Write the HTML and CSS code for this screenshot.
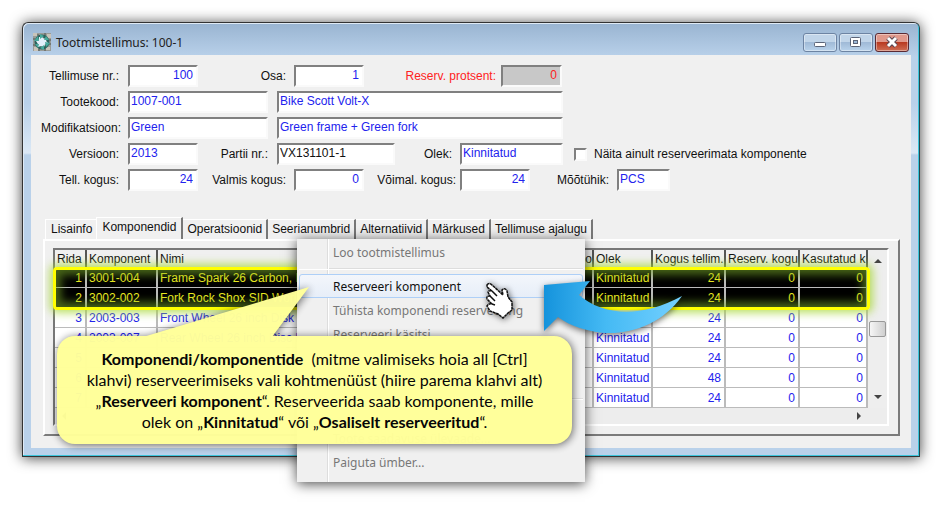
FILE: index.html
```html
<!DOCTYPE html>
<html lang="et">
<head>
    <meta charset="UTF-8">
    <title>Tootmistellimus: 100-1</title>
    <link rel="stylesheet" href="styles.css">
</head>
<body>
    <main class="window">
        <header class="titlebar">
            <svg class="app-icon" width="18" height="18" viewBox="0 0 18 18">
                <rect width="18" height="18" fill="#999c98"/>
                <path d="M0 0h4v3H0zM14 1h4v4h-4zM1 14h4v4H1zM13 14h4v3h-4z" fill="#c9c4ba"/>
                <path d="M0 6h2M5 1v2M12 0v3M16 7h2M0 12h3M6 16v2M12 15v3M15 11h3" stroke="#50544f"/>
                <circle cx="9" cy="9" r="6" fill="none" stroke="#2c625c" stroke-width="3"/>
                <path d="M9 4l2 2 3-1-1 3 2 2-3 1-1 3-3-1-3 1v-3l-2-3 3-1 0-3z" fill="#e2effa"/>
                <path d="M7 1l4 2-4 3zM13 3l3 4-5 0zM17 10l-4 4-1-5zM11 17l-4-2 4-3zM5 15l-3-4 4 0zM1 8l4-5 1 5z" fill="#46aa9d"/>
            </svg>
            <h1>Tootmistellimus: 100-1</h1>
            <div class="window-buttons">
                <button type="button" aria-label="Minimeeri">
                    <svg width="14" height="12" viewBox="0 0 14 12"><rect x="1.5" y="6.5" width="11" height="4" rx="1" fill="#fff" stroke="#5b6478"/></svg>
                </button>
                <button type="button" aria-label="Maksimeeri">
                    <svg width="14" height="12" viewBox="0 0 14 12"><rect x="1.5" y="1.5" width="10" height="9" rx="1" fill="#fff" stroke="#5b6478"/><rect x="4.5" y="4.5" width="4" height="3" fill="#9bb8d8" stroke="#5b6478"/></svg>
                </button>
                <button type="button" class="close" aria-label="Sulge">
                    <svg width="14" height="12" viewBox="0 0 14 12"><path d="M3 2l8 8M11 2l-8 8" stroke="#5a4651" stroke-width="5"/><path d="M3 2l8 8M11 2l-8 8" stroke="#fff" stroke-width="3"/></svg>
                </button>
            </div>
        </header>

        <div class="client">
            <form class="order">
                <div class="row">
                    <label class="l-first" for="tellimus">Tellimuse nr.:</label>
                    <input class="w-s num" id="tellimus" type="text" value="100">
                    <label class="l-mid" for="osa">Osa:</label>
                    <input class="w-s num" id="osa" type="text" value="1">
                    <label class="l-protsent red" for="protsent">Reserv. protsent:</label>
                    <input class="w-protsent num locked red" id="protsent" type="text" value="0" readonly>
                </div>
                <div class="row">
                    <label class="l-first" for="kood">Tootekood:</label>
                    <input class="w-l" id="kood" type="text" value="1007-001">
                    <input class="w-xl" type="text" value="Bike Scott Volt-X" aria-label="Toote nimi">
                </div>
                <div class="row">
                    <label class="l-first" for="modif">Modifikatsioon:</label>
                    <input class="w-l" id="modif" type="text" value="Green">
                    <input class="w-xl" type="text" value="Green frame + Green fork" aria-label="Modifikatsiooni nimi">
                </div>
                <div class="row">
                    <label class="l-first" for="versioon">Versioon:</label>
                    <input class="w-s" id="versioon" type="text" value="2013">
                    <label class="l-partii" for="partii">Partii nr.:</label>
                    <input class="w-m black" id="partii" type="text" value="VX131101-1">
                    <label class="l-olek" for="olek">Olek:</label>
                    <input class="w-olek" id="olek" type="text" value="Kinnitatud">
                    <input class="check" id="naita" type="checkbox">
                    <label for="naita">Näita ainult reserveerimata komponente</label>
                </div>
                <div class="row">
                    <label class="l-first" for="kogus">Tell. kogus:</label>
                    <input class="w-s num" id="kogus" type="text" value="24">
                    <label class="l-mid" for="valmis">Valmis kogus:</label>
                    <input class="w-s num" id="valmis" type="text" value="0">
                    <label class="l-mid tight" for="voimal">Võimal. kogus:</label>
                    <input class="w-s num" id="voimal" type="text" value="24">
                    <label class="l-yhik" for="yhik">Mõõtühik:</label>
                    <input class="w-xs" id="yhik" type="text" value="PCS">
                </div>
            </form>

            <nav class="tabs">
                <button type="button">Lisainfo</button>
                <button type="button" class="active">Komponendid</button>
                <button type="button">Operatsioonid</button>
                <button type="button">Seerianumbrid</button>
                <button type="button">Alternatiivid</button>
                <button type="button">Märkused</button>
                <button type="button">Tellimuse ajalugu</button>
            </nav>

            <section class="panel">
                <div class="grid">
                    <div class="grid-body">
                        <table>
                            <colgroup>
                                <col class="c-rida"><col class="c-komp"><col class="c-nimi"><col><col class="c-olek"><col class="c-tellim"><col class="c-reserv"><col class="c-kasut">
                            </colgroup>
                            <thead>
                                <tr><th>Rida</th><th>Komponent</th><th>Nimi</th><th class="num">oo</th><th>Olek</th><th>Kogus tellim.</th><th>Reserv. kogu</th><th>Kasutatud k</th></tr>
                            </thead>
                            <tbody>
                                <tr class="selected"><td class="num">1</td><td>3001-004</td><td>Frame Spark 26 Carbon, IMP</td><td></td><td>Kinnitatud</td><td class="num">24</td><td class="num">0</td><td class="num">0</td></tr>
                                <tr class="selected"><td class="num">2</td><td>3002-002</td><td>Fork Rock Shox SID World</td><td></td><td>Kinnitatud</td><td class="num">24</td><td class="num">0</td><td class="num">0</td></tr>
                                <tr><td class="num">3</td><td>2003-003</td><td>Front Wheel 26 inch Disk Br</td><td></td><td>Kinnitatud</td><td class="num">24</td><td class="num">0</td><td class="num">0</td></tr>
                                <tr><td class="num">4</td><td>2003-007</td><td>Rear Wheel 26 inch Disc Br</td><td></td><td>Kinnitatud</td><td class="num">24</td><td class="num">0</td><td class="num">0</td></tr>
                                <tr><td class="num">5</td><td></td><td></td><td></td><td>Kinnitatud</td><td class="num">24</td><td class="num">0</td><td class="num">0</td></tr>
                                <tr><td class="num">6</td><td></td><td></td><td></td><td>Kinnitatud</td><td class="num">48</td><td class="num">0</td><td class="num">0</td></tr>
                                <tr><td class="num">7</td><td></td><td></td><td></td><td>Kinnitatud</td><td class="num">24</td><td class="num">0</td><td class="num">0</td></tr>
                            </tbody>
                        </table>
                        <div class="vscroll">
                            <svg width="8" height="5" viewBox="0 0 8 5"><path d="M0 5l4-4 4 4z" fill="#444"/></svg>
                            <span class="thumb"></span>
                            <svg width="8" height="5" viewBox="0 0 8 5"><path d="M0 0l4 4 4-4z" fill="#444"/></svg>
                        </div>
                    </div>
                    <div class="hscroll">
                        <svg width="5" height="8" viewBox="0 0 5 8"><path d="M5 0L1 4l4 4z" fill="#444"/></svg>
                        <svg width="5" height="8" viewBox="0 0 5 8"><path d="M0 0l4 4-4 4z" fill="#444"/></svg>
                    </div>
                    <div class="highlight"></div>
                </div>
            </section>
        </div>
    </main>

    <div class="menu">
        <button type="button" disabled>Loo tootmistellimus</button>
        <hr>
        <button type="button" class="hover">Reserveeri komponent</button>
        <button type="button" disabled>Tühista komponendi reserveering</button>
        <button type="button" disabled>Reserveeri käsitsi</button>
        <div class="menu-gap"></div>
        <hr>
        <div class="menu-gap-small"></div>
        <button type="button" disabled>Toote saadavuse ülevaade...</button>
        <button type="button" disabled>Paiguta ümber...</button>
    </div>

    <div class="callout">
        <svg class="callout-tail" width="170" height="52" viewBox="0 0 170 52"><path d="M0 52L166 2L129 52z" fill="#ff9"/></svg>
        <p><b>Komponendi/komponentide</b>&nbsp; (mitme valimiseks hoia all [Ctrl]<br>
        klahvi) reserveerimiseks vali kohtmenüüst (hiire parema klahvi alt)<br>
        „<b>Reserveeri komponent</b>“. Reserveerida saab komponente, mille<br>
        olek on „<b>Kinnitatud</b>“ või „<b>Osaliselt reserveeritud</b>“.</p>
    </div>

    <svg class="arrow" width="142" height="58" viewBox="542 279 142 58">
        <defs>
            <linearGradient id="blue" x1="0" x2="1" y1="0" y2="0">
                <stop offset="0" stop-color="#1593dc"/>
                <stop offset=".45" stop-color="#45baf4"/>
                <stop offset="1" stop-color="#74d0ff"/>
            </linearGradient>
        </defs>
        <path d="M544 285L590 281L579 295C602 315 640 319 682 296C664 322 634 334 606 333C588 332 570 326 558 317L544 331z" fill="url(#blue)"/>
    </svg>

    <svg class="hand" width="32" height="40" viewBox="0 0 32 40">
        <path d="M2 3Q4 0 7 3L18 13L17 8Q20 5 22 9L23 15L27 20L27 28L23 31L18 36L13 32L5 29L2 24Q4 21 7 22L2 17Q1 14 5 14L3 10Q4 8 7 9L2 5z" fill="#fff" stroke="#111" stroke-width="1.5" stroke-dasharray="3 .5"/>
        <path d="M7 9l5 5M5 14l5 5M7 22l3 1" fill="none" stroke="#111" stroke-width="1.5"/>
    </svg>
</body>
</html>
```
FILE: styles.css
```css
* { box-sizing: border-box; }
body { position: relative; margin: 0; padding: 22px; background: #fff; font-family: "Liberation Sans", Arial, sans-serif; font-size: 12px; color: #111; overflow: hidden; min-height: 505px; }
button, input { font: inherit; color: inherit; margin: 0; }

.window { border: 1px solid #333; border-right-color: #27474e; border-radius: 6px 6px 0 0; background: linear-gradient(#99b4d1, #b9d1ea 34px, #b9d1ea 80px, #dbe8f5 130px, #b9d1ea 132px); padding: 0 8px 8px; box-shadow: inset -1px -1px #3cc5dc, inset 1px 1px #dfeaf5, 0 1px 14px rgba(0,0,0,0.75); }
.titlebar { display: flex; align-items: center; gap: 5px; height: 32px; padding: 6px 2px 0; }
.titlebar h1 { flex: 1; margin: 0; font: 12px "Noto Sans", sans-serif; color: #222; }
.window-buttons { display: flex; gap: 2px; }
.window-buttons button { display: flex; align-items: center; justify-content: center; width: 34px; height: 19px; padding: 0; border: 1px solid #6d84a3; border-radius: 3px; background: linear-gradient(#c1d5e9 45%, #a0bad7 50%, #b9d3ec); box-shadow: inset 0 0 0 1px rgba(255,255,255,0.4); }
.window-buttons .close { border-color: #5a2a33; background: linear-gradient(#e0998c 45%, #b93a21 50%, #cf6f55); }

.client { background: #f0f0f0; padding: 10px 11px 12px 12px; }
.order { display: flex; flex-direction: column; gap: 4px; margin-left: -2px; }
.row { display: flex; align-items: center; height: 22px; white-space: nowrap; }
.row label { flex: none; text-align: right; }
.row input[type="text"] { flex: none; height: 22px; padding: 0 3px 3px 1px; border: 2px solid; border-color: #808080 #fafafa #fafafa #808080; border-radius: 0; background: #fff; color: #2222ee; outline: none; }
.row .num { text-align: right; }
.row .l-first { width: 87px; padding-right: 9px; }
.row .l-mid { width: 96px; padding-right: 8px; }
.row .l-mid.tight { padding-right: 4px; }
.row .l-partii { width: 79px; padding-right: 9px; }
.row .l-olek { width: 65px; padding-right: 8px; }
.row .l-protsent { width: 137px; padding-right: 5px; }
.row .l-yhik { width: 87px; padding-right: 8px; }
.w-xs { width: 53px; }
.w-s { width: 70px; }
.w-m { width: 118px; }
.w-l { width: 140px; }
.w-xl { width: 286px; margin-left: 9px; }
.w-olek { width: 103px; }
.w-protsent { width: 61px; }
.row input[type="text"].black { color: #111; }
.row .red, .row input[type="text"].red { color: #f22; }
.row input[type="text"].locked { background: #c8c8c8; }
.check { appearance: none; width: 13px; height: 13px; margin: 0 7px 0 11px; border: 2px solid; border-color: #808080 #fafafa #fafafa #808080; background: #fff; }

.tabs { display: flex; align-items: flex-end; height: 22px; margin-top: 26px; padding-left: 2px; }
.tabs button { height: 20px; padding: 0 4px; border: 0; border-right: 2px solid #777; border-top: 1px solid #fff; background: none; white-space: nowrap; line-height: 19px; }
.tabs button:first-child { border-right: 0; border-left: 1px solid #fff; padding: 0 4px 0 5px; }
.tabs .active { height: 22px; border-left: 1px solid #fff; padding: 0 5px 4px; }
.panel { border: 2px solid; border-color: #fff #7b7b7b #7b7b7b #fff; padding: 7px 9px 8px 8px; }

.grid { position: relative; border: 2px solid; border-color: #777 #fff #fff #777; }
.grid-body { display: flex; }
table { flex: 1; width: 100%; min-width: 0; height: 158px; table-layout: fixed; border-collapse: collapse; background: #fff; }
th, td { height: 18px; padding: 0 0 0 2px; border-right: 2px solid #bbb; border-bottom: 1px solid #bbb; font-weight: normal; line-height: 16px; text-align: left; white-space: nowrap; overflow: hidden; }
th { background: #f0f0f0; border-right-color: #555; border-bottom: 0; }
th.num { text-align: right; }
td { color: #2222ee; }
td.num { padding-right: 3px; text-align: right; }
.selected td { background: #000; color: #eaea22; }
.c-rida { width: 31px; }
.c-komp { width: 71px; }
.c-nimi { width: 180px; }
.c-olek { width: 59px; }
.c-tellim { width: 73px; }
.c-reserv { width: 74px; }
.c-kasut { width: 68px; }
.vscroll { flex: none; display: flex; flex-direction: column; align-items: center; justify-content: space-between; width: 19px; padding: 8px 0; background: #eee; }
.thumb { width: 17px; height: 16px; border: 1px solid #999; border-radius: 2px; background: linear-gradient(90deg, #f6f6f6, #cfcfcf); }
.hscroll { display: flex; align-items: center; justify-content: space-between; height: 16px; padding: 0 25px 0 6px; background: #ededed; }
.highlight { position: absolute; top: 17px; left: -2px; right: 17px; height: 43px; border: 3px solid #ff0; border-radius: 4px; box-shadow: 0 0 9px 3px rgba(165,215,50,0.75), inset 0 0 8px 5px rgba(120,170,40,0.6); }

.menu { position: absolute; top: 239px; left: 297px; width: 288px; padding: 1px 2px 8px; display: flex; flex-direction: column; background: linear-gradient(90deg, transparent 30px, #ddd 30px, #ddd 31px, #fff 31px, #fff 32px, transparent 32px) #f0f0f0; box-shadow: 0 2px 12px rgba(0,0,0,0.7); font: 12px "Noto Sans", sans-serif; }
.menu button { height: 24px; padding: 0 0 0 33px; border: 1px solid transparent; background: none; text-align: left; color: #111; }
.menu button:disabled { color: #777; }
.menu .hover { border-color: #aecff7; border-radius: 3px; background: linear-gradient(#f3f6fb, #e7eef8); }
.menu hr { width: 100%; margin: 4px 0; padding-left: 30px; border: 0; border-bottom: 1px solid #fff; height: 2px; background: #ddd content-box; }
.menu-gap { height: 48px; }
.menu-gap-small { height: 22px; }

.callout { position: absolute; top: 336px; left: 57px; width: 515px; padding: 12px 0; border-radius: 18px; background: #ff9; filter: drop-shadow(1px 1px 4px rgba(0,0,0,0.6)); opacity: 0.98; }
.callout p { margin: 0; font: 16px/21px Lato, sans-serif; color: #000; text-align: center; white-space: nowrap; }
.callout-tail { position: absolute; left: 86px; top: -51px; }

.arrow { position: absolute; left: 542px; top: 279px; overflow: visible; filter: drop-shadow(0 2px 3px rgba(0,0,0,0.55)); }
.hand { position: absolute; left: 485px; top: 282px; filter: drop-shadow(1px 1px 3px rgba(0,0,0,0.6)); }
```
